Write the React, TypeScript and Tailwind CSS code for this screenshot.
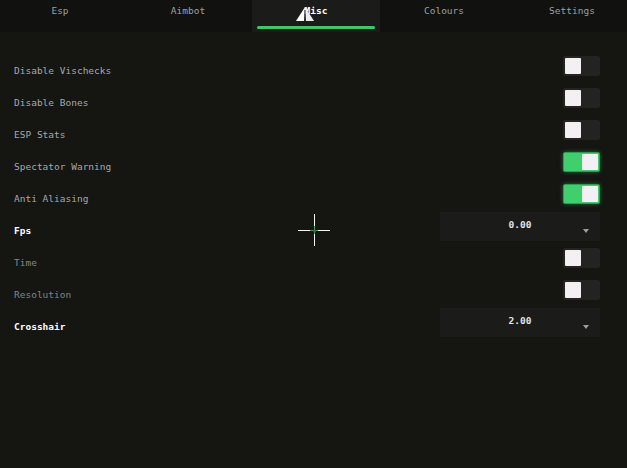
import React, { useState } from 'react';

type Row =
    | { kind: 'toggle'; label: string; on: boolean; tone: 'normal' | 'dim' }
    | { kind: 'select'; label: string; value: string };

const tabs = ['Esp', 'Aimbot', 'Misc', 'Colours', 'Settings'];

const initialRows: Row[] = [
    { kind: 'toggle', label: 'Disable Vischecks', on: false, tone: 'normal' },
    { kind: 'toggle', label: 'Disable Bones', on: false, tone: 'normal' },
    { kind: 'toggle', label: 'ESP Stats', on: false, tone: 'normal' },
    { kind: 'toggle', label: 'Spectator Warning', on: true, tone: 'normal' },
    { kind: 'toggle', label: 'Anti Aliasing', on: true, tone: 'normal' },
    { kind: 'select', label: 'Fps', value: '0.00' },
    { kind: 'toggle', label: 'Time', on: false, tone: 'dim' },
    { kind: 'toggle', label: 'Resolution', on: false, tone: 'dim' },
    { kind: 'select', label: 'Crosshair', value: '2.00' },
];

const Toggle: React.FC<{ on: boolean; onClick: () => void }> = ({ on, onClick }) => (
    <button
        onClick={onClick}
        className={`flex w-[37px] h-[20px] rounded-[2px] ${on
            ? 'bg-[#3fcf6c] justify-end border border-[#2f9a52] shadow-[0_0_4px_rgba(63,207,108,0.45)] p-[1px]'
            : 'bg-[#232321] justify-start p-[2px]'
            }`}
    >
        <span className="block w-[16px] h-[16px] rounded-[1px] bg-[#f2f0f2]" />
    </button>
);

const App: React.FC = () => {
    const [active, setActive] = useState('Misc');
    const [rows, setRows] = useState<Row[]>(initialRows);

    const flip = (i: number) => {
        setRows(rows.map((r, j) => (j === i && r.kind === 'toggle' ? { ...r, on: !r.on } : r)));
    };

    return (
        <div
            className="relative w-[627px] h-[468px] bg-[#151512] overflow-hidden"
            style={{ fontFamily: '"DejaVu Sans Mono", "Liberation Mono", monospace' }}
        >
            {/* tab strip */}
            <div className="flex h-[32px] bg-[#111110] ml-[-4px]">
                {tabs.map((t) => (
                    <button
                        key={t}
                        onClick={() => setActive(t)}
                        className={`relative shrink-0 w-[128px] flex justify-center pt-[4px] text-[9.5px] ${active === t
                            ? 'bg-[#1b1b19] text-white font-bold'
                            : 'text-[#9ca0a3]'
                            }`}
                    >
                        {t}
                        {active === t && (
                            <span className="absolute left-[5px] right-[5px] top-[26px] h-[3px] rounded-full bg-[#3cc868]" />
                        )}
                    </button>
                ))}
            </div>

            {/* option rows */}
            <div className="flex flex-col pt-[18px] pl-[14px] pr-[27px]">
                {rows.map((r, i) => (
                    <div key={r.label} className="flex h-[32px] items-center justify-between">
                        <span
                            className={`mt-[11px] text-[9.5px] ${r.kind === 'select'
                                ? 'text-white font-bold'
                                : r.tone === 'dim'
                                    ? 'text-[#80868a]'
                                    : 'text-[#a3a9ad]'
                                }`}
                        >
                            {r.label}
                        </span>
                        {r.kind === 'toggle' ? (
                            <Toggle on={r.on} onClick={() => flip(i)} />
                        ) : (
                            <div className="relative flex w-[160px] h-[29px] items-center justify-center bg-[#1b1b19] pb-[1px] text-[9.5px] font-bold text-[#e4e4e4]">
                                {r.value}
                                <svg className="absolute right-[11px] top-[17px]" width="6" height="4" viewBox="0 0 6 4">
                                    <polygon points="0,0 6,0 3,4" fill="#9a9ea0" />
                                </svg>
                            </div>
                        )}
                    </div>
                ))}
            </div>

            {/* crosshair preview */}
            <svg className="absolute left-[296px] top-[212px]" width="36" height="36" viewBox="0 0 36 36">
                <g stroke="#f4f4f4" strokeWidth="1">
                    <line x1="2" y1="18.5" x2="14" y2="18.5" />
                    <line x1="22" y1="18.5" x2="34" y2="18.5" />
                    <line x1="18.5" y1="2" x2="18.5" y2="14" />
                    <line x1="18.5" y1="22" x2="18.5" y2="34" />
                </g>
                <g stroke="#3a9a58" strokeWidth="1">
                    <line x1="14" y1="18.5" x2="22" y2="18.5" />
                    <line x1="18.5" y1="14" x2="18.5" y2="22" />
                </g>
                <rect x="17" y="18" width="3" height="2" fill="#8a3a4a" opacity="0.7" />
            </svg>

            {/* mouse pointer */}
            <svg className="absolute left-[295px] top-[6px]" width="20" height="16" viewBox="0 0 20 16">
                <polygon points="10,1 1,15 9,15" fill="#ffffff" />
                <polygon points="10,1 11,15 19,15" fill="#ececec" />
                <line x1="10" y1="4" x2="10" y2="15" stroke="#333" strokeWidth="1" />
            </svg>
        </div>
    );
};

export default App;
